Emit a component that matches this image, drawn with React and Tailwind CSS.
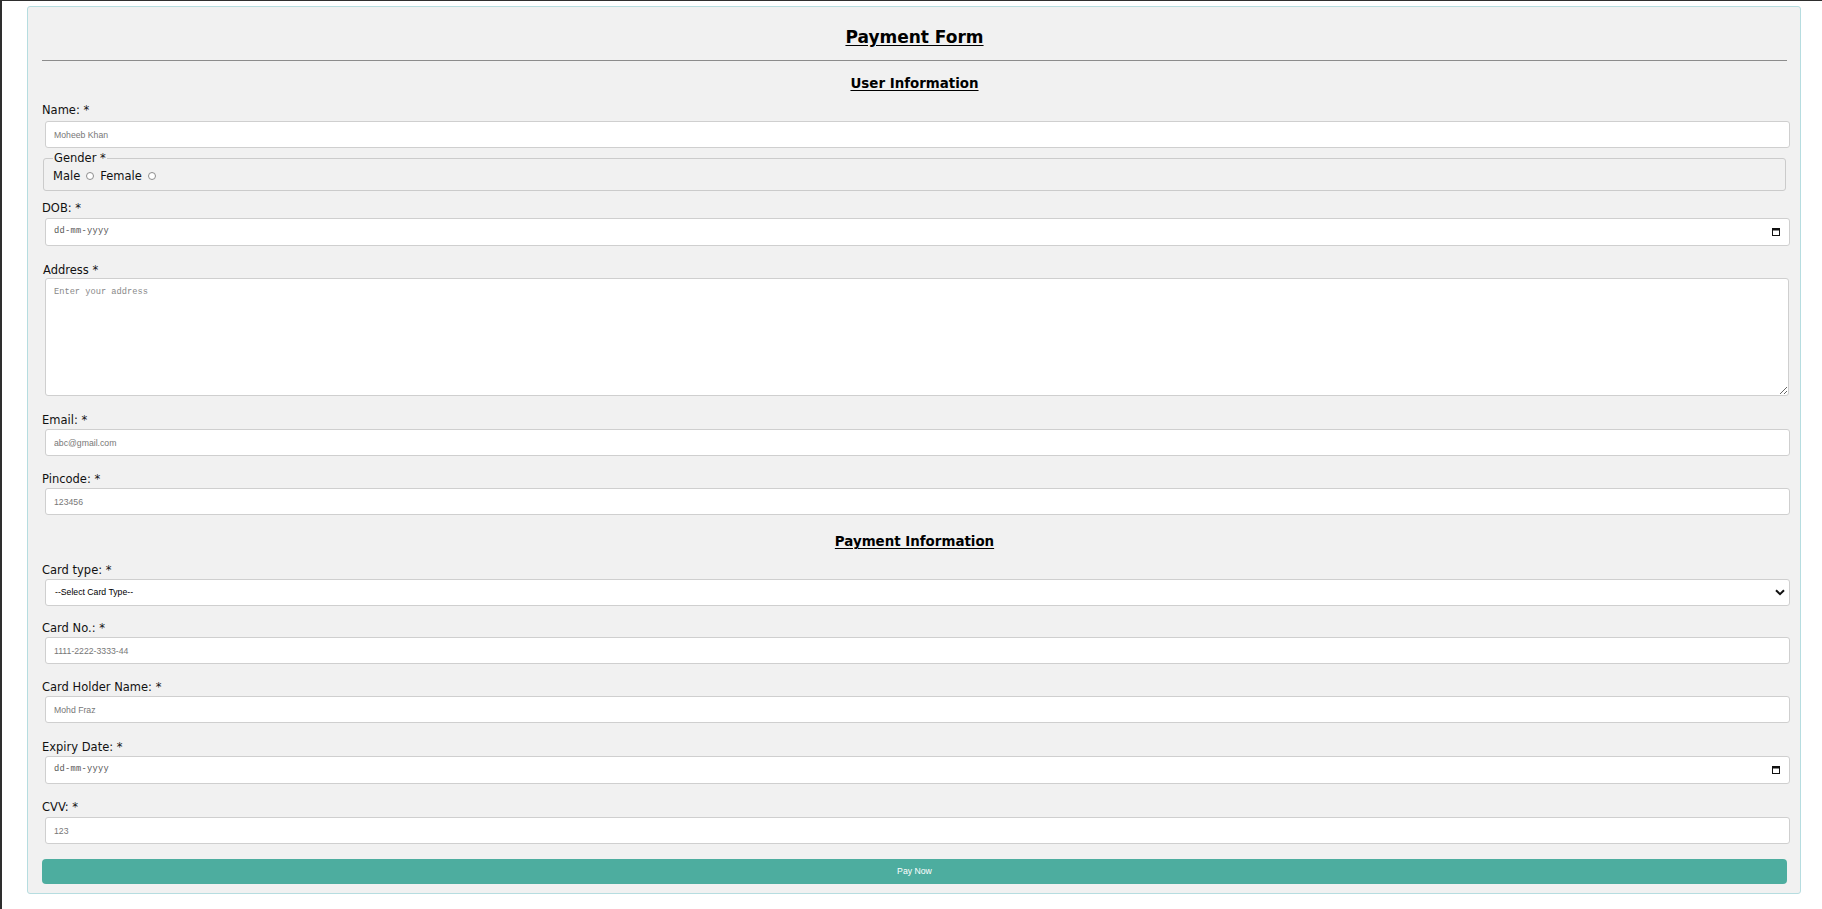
import React from 'react'

const labelCls = "block text-[11.5px] leading-[16px] text-[#111] font-['DejaVu_Sans',Verdana,sans-serif]"
const inputCls = "block ml-[3px] w-full h-[27px] bg-white border border-[#cfcfcf] rounded-[3px] pl-[8px] text-[8.7px] font-['Liberation_Sans',Arial,sans-serif] text-[#333] placeholder:text-[#777] outline-none"

const CalendarIcon = () => (
  <svg width="8" height="8" viewBox="0 0 8 8" className="mr-[9px]">
    <rect x="0.5" y="0.5" width="7" height="7" fill="none" stroke="#111" strokeWidth="1" />
    <rect x="0" y="0" width="8" height="2.5" fill="#111" />
  </svg>
)

const DateBox = () => (
  <div className="flex items-center justify-between ml-[3px] w-full h-[28px] bg-white border border-[#cfcfcf] rounded-[3px] pl-[8px]">
    <span className="text-[8.7px] text-[#555] font-['Liberation_Mono',monospace] tracking-[0.3px]">dd-mm-yyyy</span>
    <CalendarIcon />
  </div>
)

const Field = ({ label, mt, gap, children }) => (
  <div className={mt}>
    <label className={labelCls}>{label}</label>
    <div className={gap}>{children}</div>
  </div>
)

const Radio = () => (
  <span className="inline-block w-[8px] h-[8px] rounded-full border border-[#8d8d8d] bg-white" />
)

export default function App() {
  return (
    <div className="min-h-screen bg-white border-t border-l-2 border-[#2e2e2e]">
      <div className="ml-[25px] mt-[5px] w-[1774px] bg-[#f1f1f1] border border-[#b6dde0] rounded-[3px] pl-[14px] pr-[13px] pb-[9px]">
        <h1 className="pt-[20px] text-center text-[17px] leading-[20px] font-bold underline underline-offset-2 text-black font-['DejaVu_Sans',Verdana,sans-serif]">
          Payment Form
        </h1>
        <div className="mt-[13px] border-t border-[#8c8c8c]" />

        <h2 className="mt-[15px] text-center text-[13.4px] leading-[16px] font-bold underline underline-offset-2 text-black font-['DejaVu_Sans',Verdana,sans-serif]">
          User Information
        </h2>

        <Field label="Name: *" mt="mt-[10px]" gap="mt-[3px]">
          <input className={inputCls} placeholder="Moheeb Khan" />
        </Field>

        <fieldset className="mt-[3px] mx-[1px] border border-[#cbcbcb] rounded-[3px] pl-[9px] pt-[4px] pb-[7px] font-['DejaVu_Sans',Verdana,sans-serif]">
          <legend className="px-[1px] text-[11.5px] leading-[14px] text-[#111]">Gender *</legend>
          <div className="flex items-center text-[11.5px] leading-[14px] text-[#111]">
            <span>Male</span>
            <span className="ml-[6px] mr-[6px] flex items-center"><Radio /></span>
            <span>Female</span>
            <span className="ml-[6px] flex items-center"><Radio /></span>
          </div>
        </fieldset>

        <Field label="DOB: *" mt="mt-[9px]" gap="mt-[2px]">
          <DateBox />
        </Field>

        <Field label="Address *" mt="mt-[16px] ml-[1px]" gap="mt-[0px]">
          <textarea
            className="block ml-[2px] w-full h-[118px] bg-white border border-[#cfcfcf] rounded-[3px] px-[8px] pt-[8px] text-[8.7px] leading-[11px] font-['Liberation_Mono',monospace] placeholder:text-[#888] outline-none"
            placeholder="Enter your address"
          />
        </Field>

        <Field label="Email: *" mt="mt-[16px]" gap="mt-[1px]">
          <input className={inputCls} placeholder="abc@gmail.com" />
        </Field>

        <Field label="Pincode: *" mt="mt-[15px]" gap="mt-[1px]">
          <input className={inputCls} placeholder="123456" />
        </Field>

        <h2 className="mt-[19px] text-center text-[13.4px] leading-[16px] font-bold underline underline-offset-2 text-black font-['DejaVu_Sans',Verdana,sans-serif]">
          Payment Information
        </h2>

        <Field label="Card type: *" mt="mt-[12px]" gap="mt-[1px]">
          <div className="flex items-center justify-between ml-[3px] w-full h-[27px] bg-white border border-[#cfcfcf] rounded-[3px] pl-[9px]">
            <span className="text-[8.7px] text-black font-['Liberation_Sans',Arial,sans-serif]">--Select Card Type--</span>
            <svg width="10" height="7" viewBox="0 0 10 7" className="mr-[4px]">
              <path d="M1 1.2 L5 5.2 L9 1.2" fill="none" stroke="#111" strokeWidth="2" />
            </svg>
          </div>
        </Field>

        <Field label="Card No.: *" mt="mt-[14px]" gap="mt-[1px]">
          <input className={inputCls} placeholder="1111-2222-3333-44" />
        </Field>

        <Field label="Card Holder Name: *" mt="mt-[15px]" gap="mt-[1px]">
          <input className={inputCls} placeholder="Mohd Fraz" />
        </Field>

        <Field label="Expiry Date: *" mt="mt-[16px]" gap="mt-[1px]">
          <DateBox />
        </Field>

        <Field label="CVV: *" mt="mt-[15px]" gap="mt-[2px]">
          <input className={inputCls} placeholder="123" />
        </Field>

        <button className="mt-[15px] w-full h-[25px] rounded-[4px] bg-[#4dad9f] text-white text-[8.7px] font-['Liberation_Sans',Arial,sans-serif]">
          Pay Now
        </button>
      </div>
    </div>
  )
}
